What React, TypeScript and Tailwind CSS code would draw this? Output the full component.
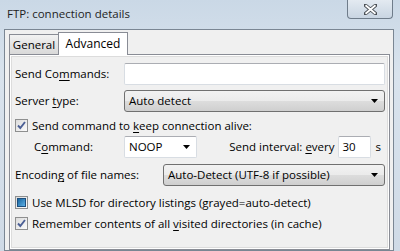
import type { ReactNode } from 'react';

const FONT = "font-['Open_Sans',sans-serif]";

function U({ children }: { children: ReactNode }) {
  return <span className="underline decoration-1 underline-offset-[2px]">{children}</span>;
}

function Arrow() {
  return (
    <svg width="7" height="4" viewBox="0 0 7 4" className="shrink-0">
      <path d="M0 0h7L3.5 4z" fill="#000" />
    </svg>
  );
}

function Check({ state }: { state: 'on' | 'mixed' }) {
  return (
    <span className="flex h-[13px] w-[13px] shrink-0 items-center justify-center border border-[#8e8f8f] bg-[linear-gradient(135deg,#dcdcdc,#fbfbfb)]">
      {state === 'on' ? (
        <svg width="11" height="11" viewBox="0 0 11 11">
          <path d="M2 5.5 L4.3 8 L9 2" fill="none" stroke="#4b5f95" strokeWidth="1.9" />
        </svg>
      ) : (
        <span className="h-[9px] w-[9px] border border-[#1d4f7e] bg-[linear-gradient(135deg,#17659f,#5eb0e5)]" />
      )}
    </span>
  );
}

function Edit({ className, children }: { className?: string; children?: ReactNode }) {
  return (
    <div
      className={`flex h-[22px] items-center rounded-[2px] border border-[#d8dde3] border-t-[#abadb3] bg-white pl-[4px] ${className ?? ''}`}
    >
      {children}
    </div>
  );
}

function Select({ className, value }: { className?: string; value: string }) {
  return (
    <div
      className={`flex h-[22px] items-center justify-between rounded-[3px] border border-[#707070] bg-[linear-gradient(#f2f2f2,#ebebeb_50%,#dddddd_50%,#cfcfcf)] pl-[4px] pr-[6px] ${className ?? ''}`}
    >
      <span>{value}</span>
      <Arrow />
    </div>
  );
}

export default function App() {
  return (
    <div
      className={`${FONT} flex h-[251px] w-[400px] flex-col overflow-hidden bg-[linear-gradient(#cad8e6,#d9e3ed_30%,#cfdae6)] text-[11.5px] leading-none text-black`}
    >
      <div className="flex h-[29px] shrink-0 items-start justify-between pl-[7px] pr-[7px]">
        <span className="mt-[8px] text-[11.5px] text-[#1e1e1e]">FTP: connection details</span>
        <div className="flex h-[19px] w-[46px] items-center justify-center rounded-b-[4px] border border-t-0 border-[#6f7c8a] bg-[linear-gradient(#e3eaf1,#c9d5e2)]">
          <svg width="13" height="11" viewBox="0 0 13 11">
            <path
              d="M1 1 L12 10 M12 1 L1 10"
              stroke="#4a4f55"
              strokeWidth="3.6"
              strokeLinecap="square"
            />
            <path d="M1.5 1.3 L11.5 9.7 M11.5 1.3 L1.5 9.7" stroke="#fff" strokeWidth="1.8" />
          </svg>
        </div>
      </div>

      <div className="flex flex-1 px-[4px] pr-[6px]">
        <div className="flex flex-1 flex-col border border-[#7a8693] bg-[#f0f0f0] pl-[4px] pr-[3px] pt-px">
          <div className="flex h-[23px] items-end">
            <div className="flex h-[20px] w-[50px] items-center justify-center border border-b-0 border-[#898c95] bg-[linear-gradient(#f3f3f3,#e4e4e4_50%,#d9d9d9)]">
              General
            </div>
            <div className="-mb-px -ml-px z-10 flex h-[23px] w-[70px] items-center justify-center border border-b-0 border-[#898c95] bg-white text-[12px]">
              Advanced
            </div>
          </div>
          <div className="flex flex-1 flex-col border border-[#898c95] bg-white p-px">
            <div className="flex flex-1 flex-col border border-[#dcdcdc] bg-[#f0f0f0] pl-[3px] pr-[2px] pt-[6px]">
              <div className="flex h-[22px] items-center">
                <span className="w-[109px]">
                  Send Co<U>m</U>mands:
                </span>
                <Edit className="flex-1" />
              </div>

              <div className="mt-[5px] flex h-[22px] items-center">
                <span className="w-[109px]">
                  Server <U>t</U>ype:
                </span>
                <Select className="flex-1" value="Auto detect" />
              </div>

              <div className="mt-[7px] flex h-[13px] items-center gap-[4px]">
                <Check state="on" />
                <span>
                  Send command to <U>k</U>eep connection alive:
                </span>
              </div>

              <div className="mt-[4px] flex h-[22px] items-center">
                <span className="ml-[19px] w-[90px]">
                  C<U>o</U>mmand:
                </span>
                <Edit className="w-[73px] justify-between pr-[6px]">
                  <span>NOOP</span>
                  <Arrow />
                </Edit>
                <span className="ml-auto mr-[3px]">
                  Send interval: <U>e</U>very
                </span>
                <Edit className="w-[33px]">30</Edit>
                <span className="ml-[5px] mr-[4px]">s</span>
              </div>

              <div className="mt-[6px] flex h-[22px] items-center">
                <span className="w-[148px]">
                  Encodin<U>g</U> of file names:
                </span>
                <Select className="flex-1" value="Auto-Detect (UTF-8 if possible)" />
              </div>

              <div className="mt-[10px] flex h-[13px] items-center gap-[4px]">
                <Check state="mixed" />
                <span>Use MLSD for directory listings (grayed=auto-detect)</span>
              </div>

              <div className="mt-[8px] flex h-[13px] items-center gap-[4px]">
                <Check state="on" />
                <span>
                  Remember contents of all <U>v</U>isited directories (in cache)
                </span>
              </div>
            </div>
          </div>
        </div>
      </div>
    </div>
  );
}
